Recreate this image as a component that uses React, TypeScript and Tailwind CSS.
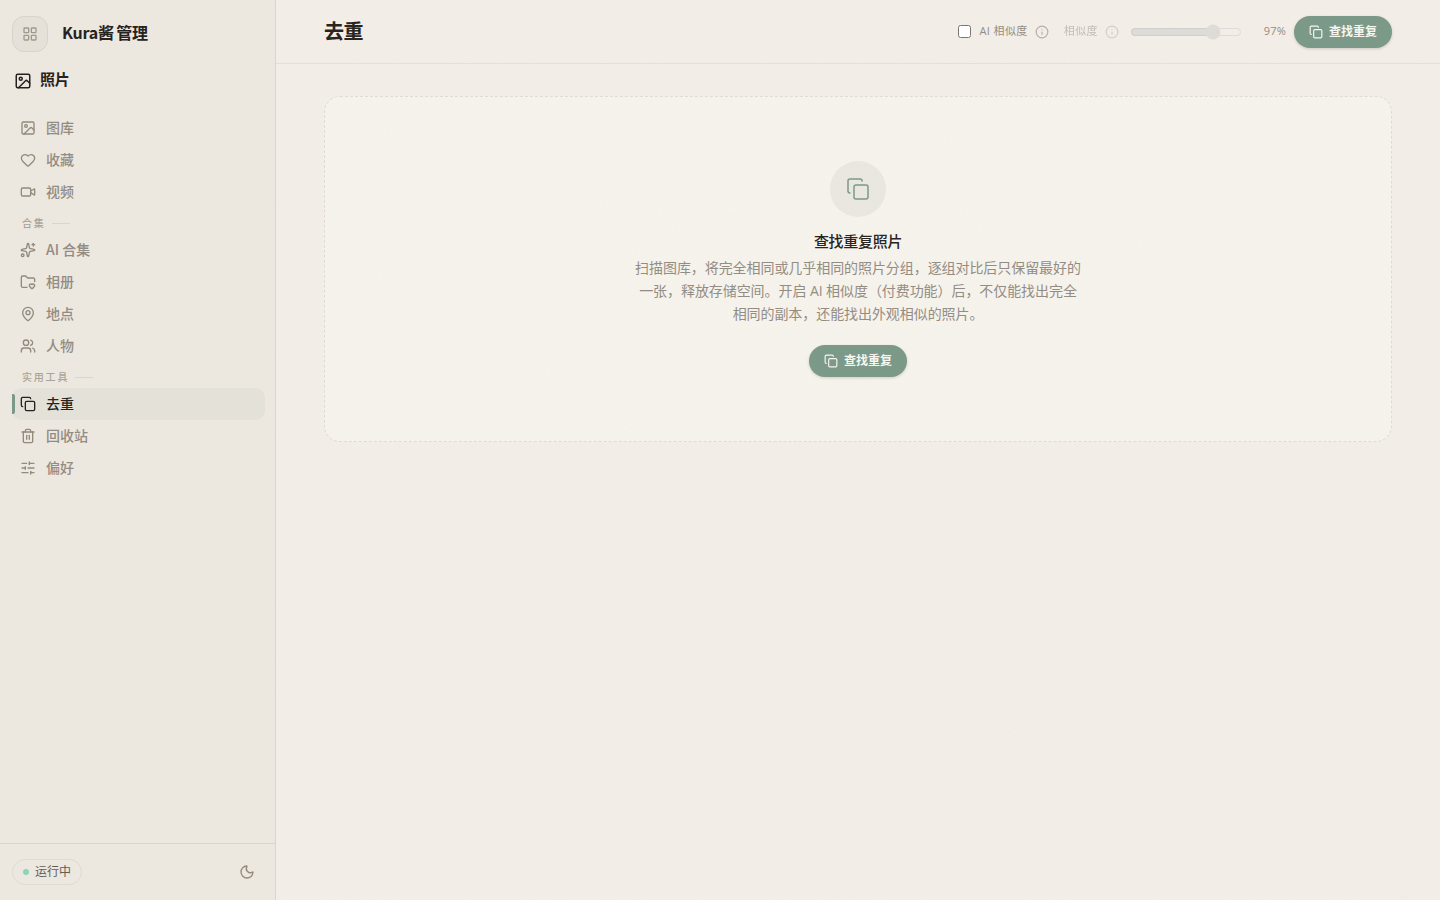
import type { LucideIcon } from "lucide-react";
import {
  Copy,
  FolderHeart,
  Heart,
  Image,
  Info,
  LayoutGrid,
  MapPin,
  Moon,
  SlidersHorizontal,
  Sparkles,
  Trash2,
  Users,
  Video,
} from "lucide-react";
import { clsx } from "clsx";

type NavItem = { label: string; icon: LucideIcon; active?: boolean };
type NavGroup = { title?: string; items: NavItem[] };

const NAV: NavGroup[] = [
  {
    items: [
      { label: "图库", icon: Image },
      { label: "收藏", icon: Heart },
      { label: "视频", icon: Video },
    ],
  },
  {
    title: "合集",
    items: [
      { label: "AI 合集", icon: Sparkles },
      { label: "相册", icon: FolderHeart },
      { label: "地点", icon: MapPin },
      { label: "人物", icon: Users },
    ],
  },
  {
    title: "实用工具",
    items: [
      { label: "去重", icon: Copy, active: true },
      { label: "回收站", icon: Trash2 },
      { label: "偏好", icon: SlidersHorizontal },
    ],
  },
];

function NavLink({ label, icon: Icon, active }: NavItem) {
  return (
    <a
      className={clsx(
        "relative flex h-8 items-center gap-2.5 rounded-[10px] px-2 text-sm font-medium",
        active ? "bg-[#e4e1d9] text-[#26231f]" : "text-[#938c83]",
      )}
    >
      {active && (
        <span className="absolute top-1.5 left-0 h-5 w-[3px] rounded-r-xs bg-[#7b9988]" />
      )}
      <Icon
        size={16}
        strokeWidth={2}
        className={active ? "text-[#26231f]" : "text-[#918a7d]"}
      />
      <span className="mb-0.5 font-['Noto_Sans_CJK_SC',sans-serif]">
        {label}
      </span>
    </a>
  );
}

function Sidebar() {
  return (
    <aside className="flex w-[276px] shrink-0 flex-col border-r border-[#dad6cf] bg-[#ece7df]">
      <div className="flex items-center gap-3.5 px-3 pt-4">
        <div className="flex size-9 items-center justify-center rounded-xl border border-[#d8d4cc] bg-[#e5e1d9] text-[#a09a8c]">
          <LayoutGrid size={16} strokeWidth={2} />
        </div>
        <span className="mb-1 font-['Noto_Sans_CJK_SC',sans-serif] text-base leading-6 font-semibold tracking-[-0.2px] text-[#26231f] [word-spacing:-1px]">
          Kura酱 管理
        </span>
      </div>

      <div className="mt-4 flex h-6 items-center gap-2 px-3.5 text-[15px] font-semibold tracking-[-0.3px] text-[#26231f]">
        <Image size={18} strokeWidth={2} className="mt-0.5" />
        <span className="mb-0.5">照片</span>
      </div>

      <nav className="flex flex-1 flex-col pt-5 pr-2.5 pl-3">
        {NAV.map((group, i) => (
          <div key={i} className="flex flex-col">
            {group.title && (
              <div className="flex h-[26px] items-center gap-1.5 px-2.5 pt-1 text-[10px] font-medium tracking-[1.8px] text-[#aaa399]">
                <span>{group.title}</span>
                <span className="h-px w-[18px] bg-[#d9d5cd]" />
              </div>
            )}
            {group.items.map((item) => (
              <NavLink key={item.label} {...item} />
            ))}
          </div>
        ))}
      </nav>

      <div className="flex h-[57px] items-center justify-between border-t border-[#dad6cf] pr-5 pl-3">
        <span className="flex h-[26px] items-center gap-1.5 rounded-full border border-[#dfdbd3] px-2.5 text-xs text-[#625d56]">
          <span className="size-1.5 rounded-full bg-[#8ad5b4]" />
          运行中
        </span>
        <Moon size={16} strokeWidth={2} className="text-[#918a7d]" />
      </div>
    </aside>
  );
}

function ScanButton() {
  return (
    <button className="flex h-8 items-center gap-1.5 rounded-full bg-[#7b9988] px-[15px] text-xs font-bold tracking-normal text-[#f8f6f1] shadow-[0_1px_3px_rgba(60,50,40,0.2)]">
      <Copy size={14} strokeWidth={2} />
      查找重复
    </button>
  );
}

function Grain() {
  return (
    <svg
      className="pointer-events-none absolute inset-0 size-full opacity-[0.025]"
      aria-hidden
    >
      <filter id="grain">
        <feTurbulence
          type="fractalNoise"
          baseFrequency="0.85"
          numOctaves="3"
          stitchTiles="stitch"
        />
      </filter>
      <rect width="100%" height="100%" filter="url(#grain)" />
    </svg>
  );
}

export default function App() {
  return (
    <div className="flex h-screen overflow-hidden bg-[#f3eee7] font-['Open_Sans','Noto_Sans_CJK_SC',sans-serif]">
      <Sidebar />
      <main className="relative flex min-w-0 flex-1 flex-col">
        <header className="flex h-16 items-center justify-between border-b border-[#e5e0da] px-12">
          <h1 className="text-xl font-semibold tracking-[-0.4px] text-[#26231f]">
            去重
          </h1>
          <div className="flex items-center gap-2 text-[11px] tracking-[0.4px] text-[#938c83]">
            <label className="flex items-center gap-[7px]">
              <input type="checkbox" className="mr-px size-[13px]" />
              <span>AI 相似度</span>
              <Info size={14} className="text-[#b5afa7]" />
            </label>
            <div className="ml-[7px] flex items-center gap-[7px] opacity-50">
              <span>相似度</span>
              <Info size={14} className="text-[#b5afa7]" />
            </div>
            <input
              type="range"
              min={90}
              max={99}
              defaultValue={97}
              disabled
              className="ml-[3px] w-28 opacity-50"
            />
            <span className="w-9 text-right tracking-[0.2px]">97%</span>
            <ScanButton />
          </div>
        </header>

        <section className="mx-12 mt-8 flex h-[346px] flex-col items-center rounded-2xl border border-dashed border-[#dfdcd6] bg-[#f6f3ec] pt-16">
          <div className="flex size-14 items-center justify-center rounded-full bg-[#eae7e1] text-[#7b9988]">
            <Copy size={24} strokeWidth={1.5} />
          </div>
          <h2 className="mt-[13px] text-[15px] leading-[22px] font-medium tracking-[-0.3px] text-[#26231f]">
            查找重复照片
          </h2>
          <p className="mt-1 w-[448px] text-center text-sm leading-[23px] tracking-[-0.07px] text-[#938c83]">
            扫描图库，将完全相同或几乎相同的照片分组，逐组对比后只保留最好的一张，释放存储空间。开启
            AI 相似度（付费功能）后，不仅能找出完全相同的副本，还能找出外观相似的照片。
          </p>
          <div className="mt-5">
            <ScanButton />
          </div>
        </section>
        <Grain />
      </main>
    </div>
  );
}
